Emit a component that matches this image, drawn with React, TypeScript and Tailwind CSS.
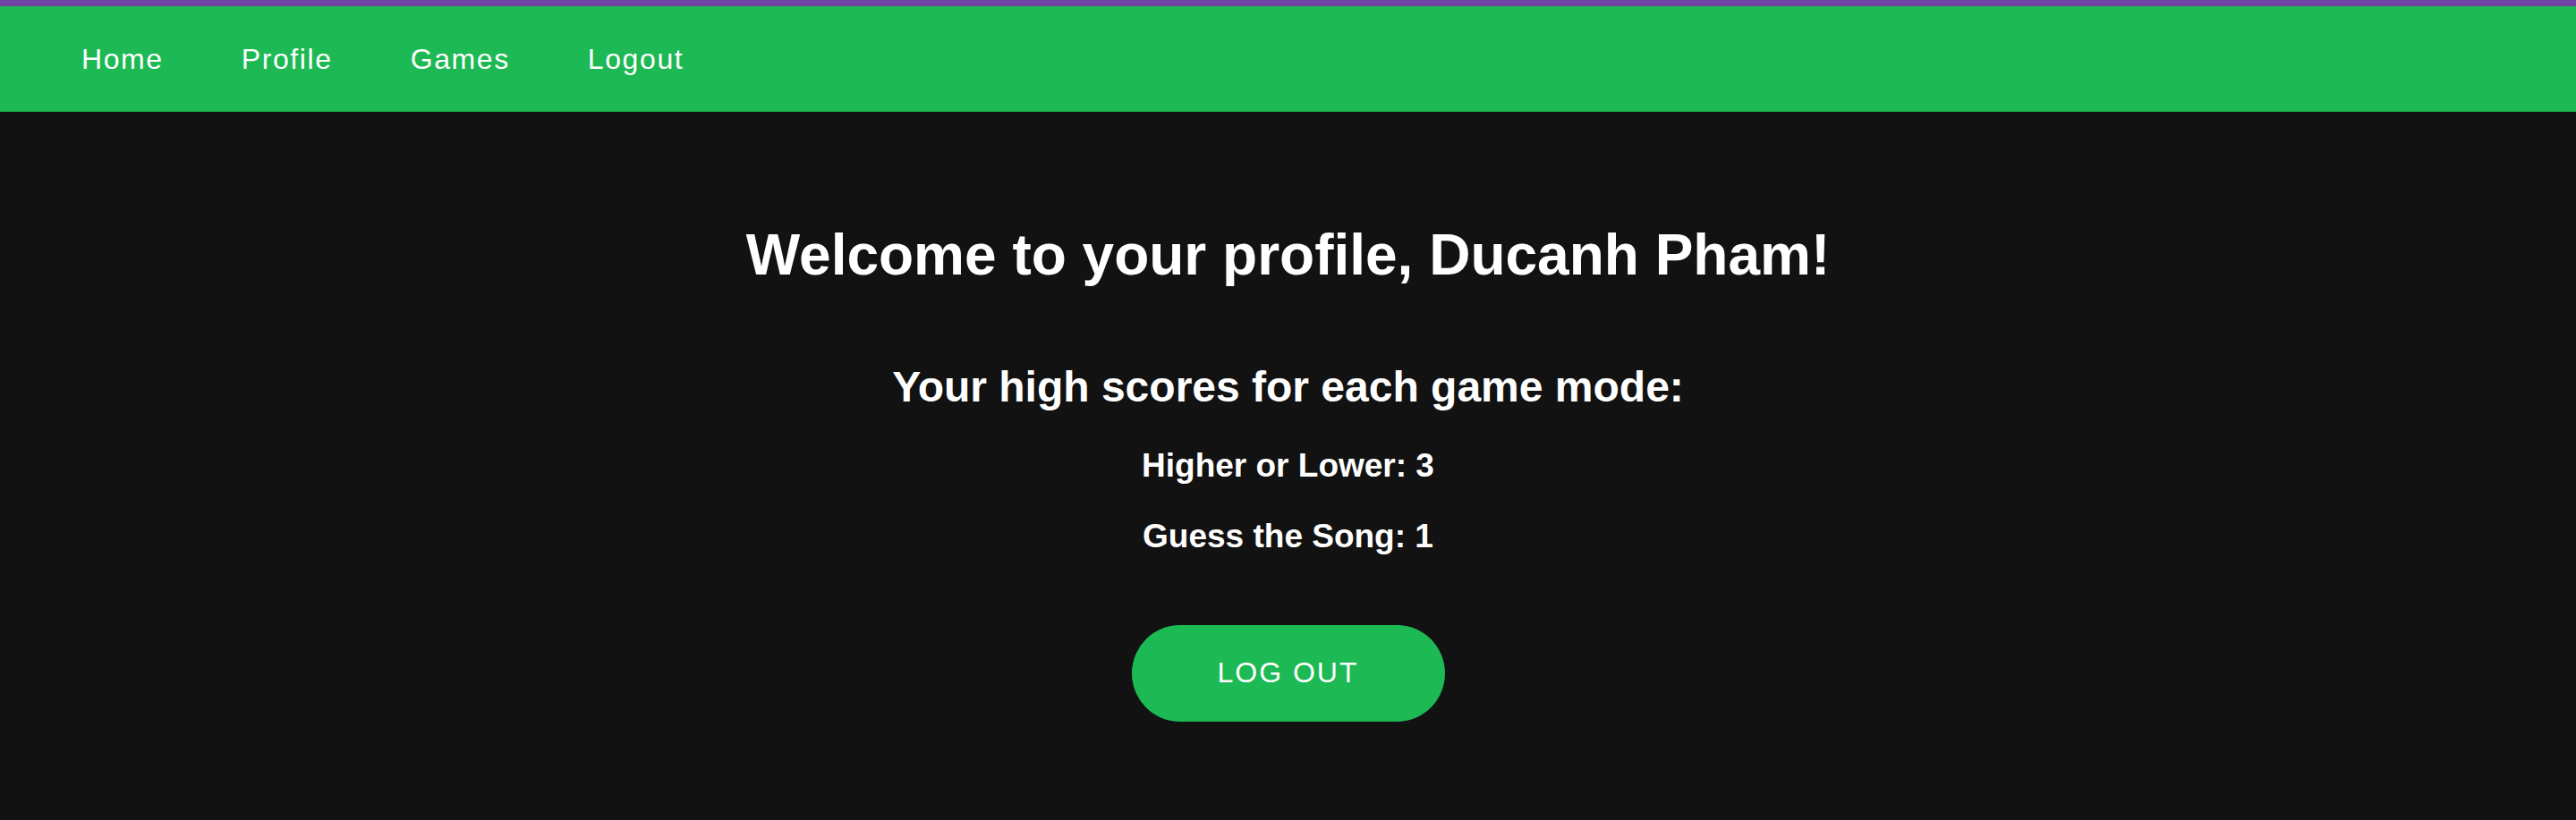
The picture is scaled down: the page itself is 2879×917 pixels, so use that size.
const links = ["Home", "Profile", "Games", "Logout"];

const scores = [
  { mode: "Higher or Lower", score: 3 },
  { mode: "Guess the Song", score: 1 },
];

const App = () => {
  return (
    <div className="min-h-screen bg-[#121212] font-['Liberation_Sans',Arial,sans-serif] text-white">
      <div className="h-[7px] bg-[#7045a5]" />
      <nav className="flex h-[118px] items-center gap-[87px] bg-[#1db954] pl-[91px]">
        {links.map((link) => (
          <a
            key={link}
            href="#"
            className="text-[32px] leading-none tracking-[1.6px] text-white"
          >
            {link}
          </a>
        ))}
      </nav>
      <main className="flex flex-col items-center pt-[128px]">
        <h1 className="text-[64px] font-bold leading-none">
          Welcome to your profile, Ducanh Pham!
        </h1>
        <h2 className="mt-[92px] text-[48px] font-bold leading-none">
          Your high scores for each game mode:
        </h2>
        <div className="mt-[45px] flex flex-col items-center gap-[42px]">
          {scores.map((s) => (
            <h3 key={s.mode} className="text-[37px] font-bold leading-none">
              {s.mode}: {s.score}
            </h3>
          ))}
        </div>
        <button
          type="button"
          className="mt-[81px] flex h-[108px] w-[350px] items-center justify-center rounded-full bg-[#1db954] pb-[2px] text-[32px] uppercase tracking-[2px] text-white"
        >
          Log out
        </button>
      </main>
    </div>
  );
};

export default App;
